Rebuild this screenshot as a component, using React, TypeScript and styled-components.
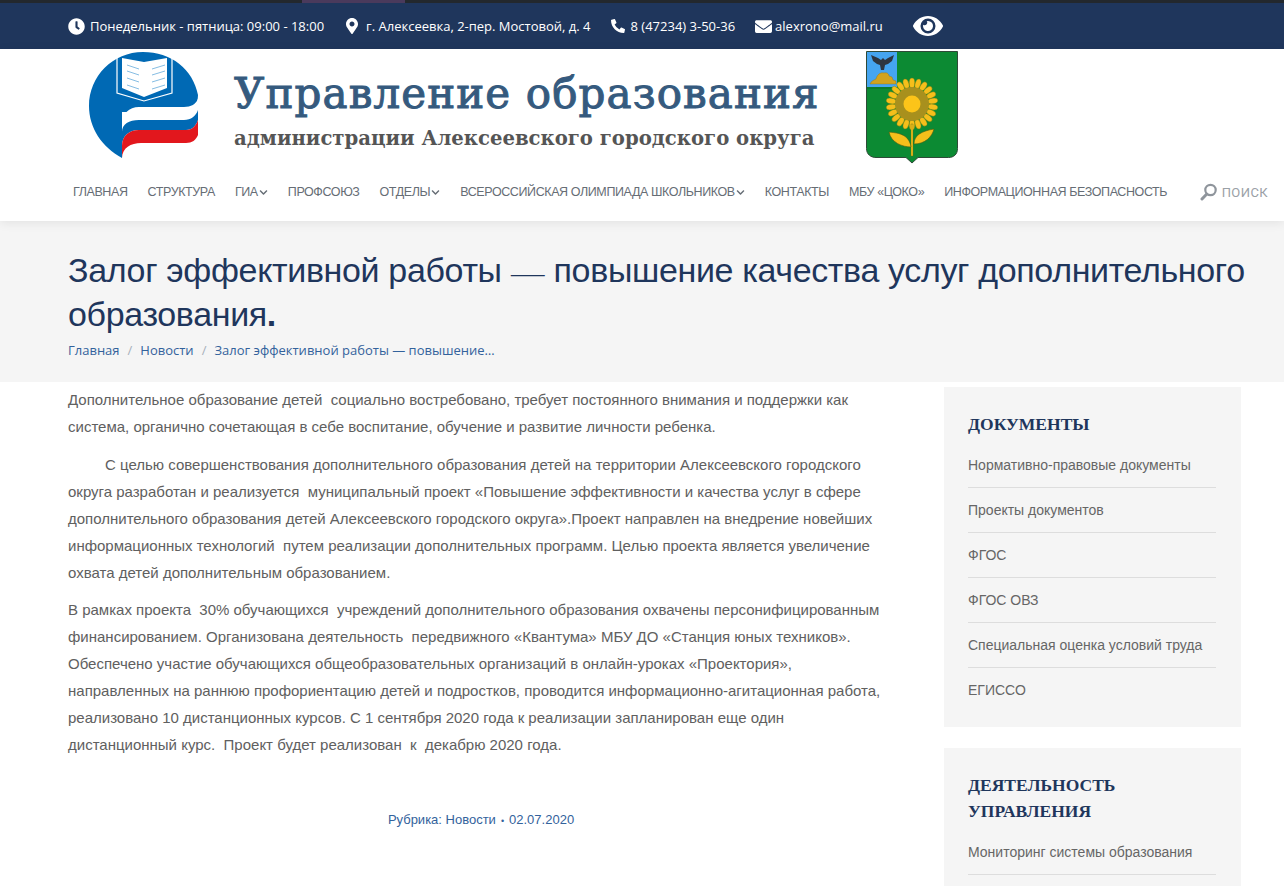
import React from "react";
import styled, { createGlobalStyle } from "styled-components";
import {
  FaClock,
  FaMapMarkerAlt,
  FaPhoneAlt,
  FaEnvelope,
  FaEye,
  FaChevronDown,
} from "react-icons/fa";

const navItems = [
  { label: "ГЛАВНАЯ" },
  { label: "СТРУКТУРА" },
  { label: "ГИА", arrow: true },
  { label: "ПРОФСОЮЗ" },
  { label: "ОТДЕЛЫ", arrow: true },
  { label: "ВСЕРОССИЙСКАЯ ОЛИМПИАДА ШКОЛЬНИКОВ", arrow: true },
  { label: "КОНТАКТЫ" },
  { label: "МБУ «ЦОКО»" },
  { label: "ИНФОРМАЦИОННАЯ БЕЗОПАСНОСТЬ" },
];

const documents = [
  "Нормативно-правовые документы",
  "Проекты документов",
  "ФГОС",
  "ФГОС ОВЗ",
  "Специальная оценка условий труда",
  "ЕГИССО",
];

const SchoolLogo = () => (
  <svg width="112" height="108" viewBox="0 0 112 108">
    <path
      d="M54 0C24 0 0 24 0 54c0 22 13 41 33 52V60h62c9 0 14-8 14-17C104 17 82 0 54 0z"
      fill="#0069b4"
    />
    <path
      d="M33 80v-8c0-10 7-17 17-17h45c7 0 12-3 14-8v11c-2 6-7 10-14 10H50c-10 0-17 4-17 12z"
      fill="#fff"
    />
    <path
      d="M33 94V80c0-8 7-12 17-12h45c7 0 12-4 14-10v10c-2 6-6 10-12 10H50c-10 0-17 6-17 16z"
      fill="#0069b4"
    />
    <path
      d="M33 106V94c0-10 7-16 17-16h47c6 0 10-4 12-10v15c-2 5-6 8-12 8H52c-10 0-19 5-19 15z"
      fill="#e2171d"
    />
    <path d="M28 5v36l27 8 28-8V5" fill="none" stroke="#fff" strokeWidth="1.200" />
    <path d="M33 6l22 4 23-4v30l-23 9-22-9z" fill="#fff" />
    <g stroke="#86bde3" strokeWidth="1">
      <path d="M38 13l12 4M38 19l12 4M38 26l12 4M38 33l12 4" />
      <path d="M63 17l13-4M63 23l13-4M63 30l13-4M63 37l13-4" />
    </g>
  </svg>
);

const petals = Array.from({ length: 22 }, (_, i) => (i * 360) / 22);

const CoatOfArms = () => (
  <svg width="92" height="113" viewBox="0 0 92 113">
    <defs>
      <pattern id="seeds" width="2" height="2" patternUnits="userSpaceOnUse">
        <rect width="2" height="2" fill="#c9a51d" />
        <circle cx="1" cy="1" r="0.700" fill="#6f6a1c" />
      </pattern>
    </defs>
    <path
      d="M.5.5h91v97c0 6-4 9-9 9H52l-6 5.500-6-5.500H10c-5 0-9.500-3-9.500-9z"
      fill="#0c8a33"
      stroke="#2f4a38"
    />
    <rect x="1" y="1" width="30" height="35" fill="#45a5f0" />
    <path d="M1 37h30" stroke="#0a6a28" strokeWidth="1" />
    <path
      d="M5 4l7 3 3 2 2-2 2 2 3-2 6-3-2 6-4 3-3 1-1 5h-3l-1-5-3-1-4-3z"
      fill="#2e3640"
    />
    <path
      d="M4 33c1-3 4-4 6-5 1-4 4-7 8-6 3-1 5 1 5 3l3 1 1 3 3 1v3z"
      fill="#d2a31e"
      stroke="#8d7415"
      strokeWidth="0.400"
    />
    {petals.map((angle) => (
      <ellipse
        key={angle}
        cx="46"
        cy="32"
        rx="2.800"
        ry="5"
        fill="#f5bf1b"
        stroke="#6f7a12"
        strokeWidth="0.400"
        transform={`rotate(${angle} 46 53)`}
      />
    ))}
    <circle cx="46" cy="53" r="17" fill="url(#seeds)" />
    <circle cx="46" cy="53" r="8.500" fill="#fcc419" />
    <path d="M45 73h2v32h-2z" fill="#f5bf1b" stroke="#5c6a10" strokeWidth="0.400" />
    <path
      d="M45 96c-8 0-20-4-22-15 7 1 20 1 22 15zM48 93c0-9 8-13 20-15-2 8-9 15-20 15z"
      fill="#f5bf1b"
      stroke="#4c5a10"
      strokeWidth="0.600"
    />
  </svg>
);

const App = () => {
  return (
    <Page>
      <GlobalStyle />
      <TopStrip>
        <StripAccent />
      </TopStrip>
      <InfoBar>
        <InfoItem $gap={5}>
          <FaClock size={17} />
          Понедельник - пятница: 09:00 - 18:00
        </InfoItem>
        <InfoItem $gap={6}>
          <FaMapMarkerAlt size={16} />
          г. Алексеевка, 2-пер. Мостовой, д. 4
        </InfoItem>
        <InfoItem $gap={6}>
          <FaPhoneAlt size={14} />8 (47234) 3-50-36
        </InfoItem>
        <InfoItem $gap={3}>
          <FaEnvelope size={17} />
          alexrono@mail.ru
        </InfoItem>
        <EyeButton>
          <FaEye size={30} />
        </EyeButton>
      </InfoBar>

      <Header>
        <BrandRow>
          <SchoolLogo />
          <BrandText>
            <BrandTitle>Управление образования</BrandTitle>
            <BrandSubtitle>администрации Алексеевского городского округа</BrandSubtitle>
          </BrandText>
          <CoatOfArms />
        </BrandRow>
        <Nav>
          {navItems.map((item) => (
            <NavItem key={item.label}>
              {item.label}
              {item.arrow && <FaChevronDown size={9} />}
            </NavItem>
          ))}
          <SearchLink>
            <svg width="18" height="18" viewBox="0 0 18 18">
              <circle cx="10.500" cy="7" r="5.200" fill="none" stroke="#8f959c" strokeWidth="2.200" />
              <path d="M6.800 11L2 16" stroke="#8f959c" strokeWidth="3" strokeLinecap="round" />
            </svg>
            ПОИСК
          </SearchLink>
        </Nav>
      </Header>

      <TitleBand>
        <PageTitle>
          Залог эффективной работы <Dash>—</Dash> повышение качества услуг дополнительного
          образования<Dot>.</Dot>
        </PageTitle>
        <Breadcrumbs>
          <span>Главная</span>
          <Sep>/</Sep>
          <span>Новости</span>
          <Sep>/</Sep>
          <span>Залог эффективной работы — повышение…</span>
        </Breadcrumbs>
      </TitleBand>

      <Content>
        <Article>
          <Para>
            Дополнительное образование детей&nbsp; социально востребовано, требует постоянного
            внимания и поддержки как система, органично сочетающая в себе воспитание, обучение и
            развитие личности ребенка.
          </Para>
          <Para $indent>
            С целью совершенствования дополнительного образования детей на территории Алексеевского
            городского округа разработан и реализуется&nbsp; муниципальный проект «Повышение
            эффективности и качества услуг в сфере дополнительного образования детей Алексеевского
            городского округа».Проект направлен на внедрение новейших информационных технологий&nbsp;
            путем реализации дополнительных программ. Целью проекта является увеличение охвата детей
            дополнительным образованием.
          </Para>
          <Para>
            В рамках проекта&nbsp; 30% обучающихся&nbsp; учреждений дополнительного образования
            охвачены персонифицированным финансированием. Организована деятельность&nbsp; передвижного
            «Квантума» МБУ ДО «Станция юных техников». Обеспечено участие обучающихся
            общеобразовательных организаций в онлайн-уроках «Проектория», направленных на раннюю
            профориентацию детей и подростков, проводится информационно-агитационная работа,
            реализовано 10 дистанционных курсов. С 1 сентября 2020 года к реализации запланирован еще
            один дистанционный курс.&nbsp; Проект будет реализован&nbsp; к&nbsp; декабрю 2020 года.
          </Para>
          <Meta>
            Рубрика: Новости<MetaDot>•</MetaDot>02.07.2020
          </Meta>
        </Article>
        <Sidebar>
          <Widget>
            <WidgetTitle>ДОКУМЕНТЫ</WidgetTitle>
            <LinkList>
              {documents.map((doc) => (
                <LinkRow key={doc}>{doc}</LinkRow>
              ))}
            </LinkList>
          </Widget>
          <Widget>
            <WidgetTitle>ДЕЯТЕЛЬНОСТЬ УПРАВЛЕНИЯ</WidgetTitle>
            <LinkList>
              <LinkRow>Мониторинг системы образования</LinkRow>
            </LinkList>
          </Widget>
        </Sidebar>
      </Content>
    </Page>
  );
};

export default App;

const GlobalStyle = createGlobalStyle`
  html, body {
    margin: 0;
    padding: 0;
    background: #fff;
    overflow: hidden;
  }
`;

const Page = styled.div`
  width: 1284px;
  height: 886px;
  overflow: hidden;
  font-family: "Liberation Sans", Arial, sans-serif;
`;

const TopStrip = styled.div`
  height: 3px;
  background: #23282d;
  padding-left: 302px;
`;

const StripAccent = styled.div`
  width: 103px;
  height: 3px;
  background: #4a3a5c;
`;

const InfoBar = styled.div`
  height: 46px;
  background: #1f365c;
  display: flex;
  align-items: center;
  padding-left: 68px;
  color: #fff;
  font-family: "Open Sans", sans-serif;
  font-size: 13px;
`;

const InfoItem = styled.div<{ $gap: number }>`
  display: flex;
  align-items: center;
  gap: ${(props) => props.$gap}px;
  margin-right: 20px;
  white-space: nowrap;
`;

const EyeButton = styled.div`
  display: flex;
  margin-left: 10px;
`;

const Header = styled.header`
  position: relative;
  height: 172px;
  background: #fff;
  box-shadow: 0 2px 10px rgba(0, 0, 0, 0.08);
`;

const BrandRow = styled.div`
  height: 118px;
  display: flex;
  align-items: flex-start;
  padding: 2px 0 0 89px;

  > svg:first-child {
    margin-top: 1px;
  }
`;

const BrandText = styled.div`
  width: 632px;
  margin-left: 33px;
  padding-top: 17px;
  color: #355a7e;
`;

const BrandTitle = styled.div`
  font-family: "DejaVu Serif", serif;
  font-weight: 400;
  -webkit-text-stroke: 1px #355a7e;
  font-size: 42px;
  letter-spacing: 1.100px;
  line-height: 52px;
  white-space: nowrap;
`;

const BrandSubtitle = styled.div`
  margin-top: 4px;
  font-family: "DejaVu Serif", serif;
  font-weight: 700;
  font-size: 19.650px;
  line-height: 30px;
  color: #555;
  white-space: nowrap;
`;

const Nav = styled.nav`
  display: flex;
  align-items: center;
  height: 24px;
  margin-top: 11px;
  padding: 0 16px 0 73px;
  font-family: "Liberation Sans", sans-serif;
  font-size: 12.500px;
  color: #666d75;
  gap: 20px;
`;

const NavItem = styled.div`
  display: flex;
  align-items: center;
  gap: 1px;
  white-space: nowrap;
  letter-spacing: -0.4px;
`;

const SearchLink = styled.div`
  display: flex;
  align-items: center;
  gap: 4px;
  margin-left: auto;
  font-family: "Roboto", sans-serif;
  font-size: 13px;
  letter-spacing: 0.4px;
  color: #9aa0a6;
  white-space: nowrap;
`;

const TitleBand = styled.section`
  height: 161px;
  box-sizing: border-box;
  background: #f5f5f5;
  padding: 27px 30px 0 68px;
`;

const PageTitle = styled.h1`
  margin: 0;
  font-family: "Liberation Sans", Arial, sans-serif;
  font-size: 34px;
  letter-spacing: -0.35px;
  line-height: 44px;
  font-weight: 400;
  color: #1f365c;
`;

const Dash = styled.span`
  display: inline-block;
  transform: translateY(4px) scaleY(0.5);
`;

const Dot = styled.b`
  font-weight: 700;
`;

const Breadcrumbs = styled.div`
  margin-top: 4px;
  font-family: "Open Sans", sans-serif;
  font-size: 13px;
  line-height: 20px;
  color: #33629c;
`;

const Sep = styled.span`
  margin: 0 8px;
  color: #a7b0bb;
`;

const Content = styled.main`
  display: flex;
  align-items: flex-start;
  padding: 4px 43px 0 68px;
`;

const Article = styled.article`
  width: 826px;
  margin-right: 50px;
  font-size: 15px;
  line-height: 27px;
  color: #606060;
`;

const Para = styled.p<{ $indent?: boolean }>`
  margin: 0 0 10.500px;
  text-indent: ${(props) => (props.$indent ? "37px" : "0")};
`;

const Meta = styled.div`
  margin-top: 48px;
  text-align: center;
  font-size: 13px;
  color: #33629c;
`;

const MetaDot = styled.span`
  margin: 0 5px;
  font-size: 9px;
`;

const Sidebar = styled.aside`
  width: 297px;
  margin-top: 1px;
  display: flex;
  flex-direction: column;
  gap: 21px;
`;

const Widget = styled.section`
  background: #f5f5f5;
  padding: 24px 25px 14px 24px;
`;

const WidgetTitle = styled.h3`
  margin: 0 0 5px;
  font-family: "Liberation Serif", serif;
  font-size: 17.500px;
  line-height: 26.500px;
  font-weight: 700;
  color: #1f365c;
`;

const LinkList = styled.div`
  display: flex;
  flex-direction: column;
`;

const LinkRow = styled.div`
  height: 45px;
  box-sizing: border-box;
  padding-top: 9px;
  line-height: 26px;
  font-size: 14px;
  color: #666;
  border-bottom: 1px solid #ddd;

  &:nth-child(6) {
    border-bottom: none;
  }
`;
